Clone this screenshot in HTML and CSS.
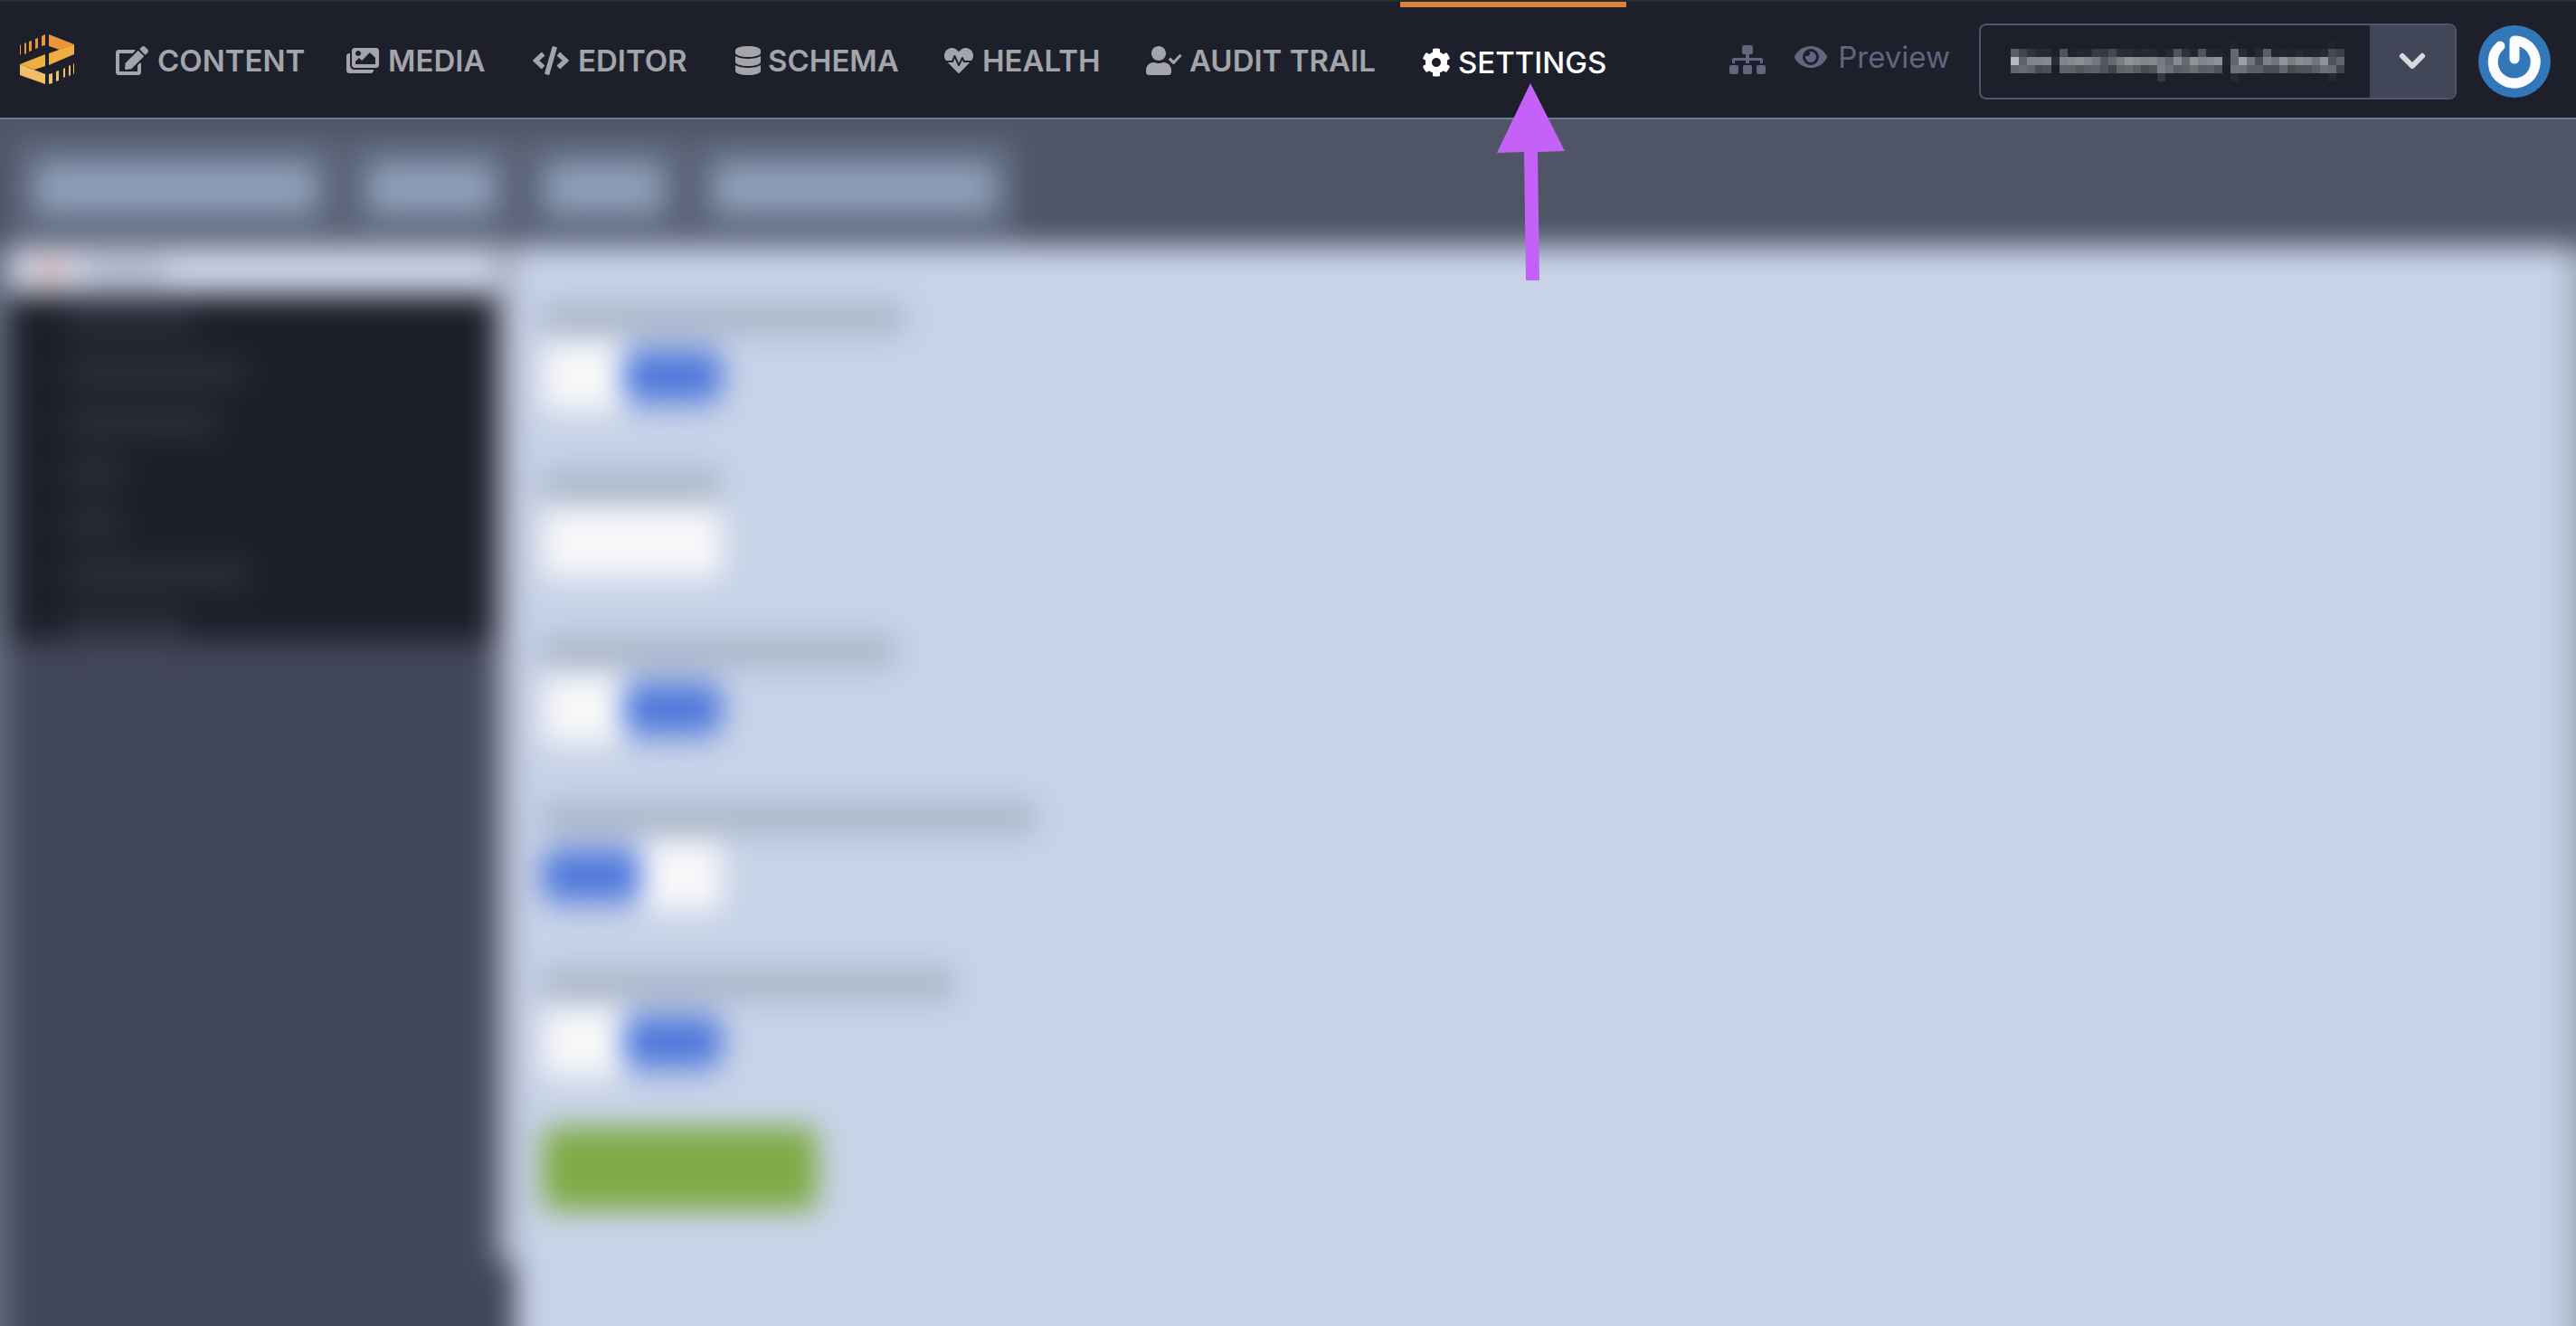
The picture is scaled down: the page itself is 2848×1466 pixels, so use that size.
FILE: index.html
```html
<!DOCTYPE html>
<html lang="en">
<head>
<meta charset="utf-8">
<title>Settings</title>
<link rel="stylesheet" href="styles.css">
</head>
<body>
<header class="topbar">
  <a class="logo" href="#" aria-label="Home">
    <svg width="60" height="56" viewBox="0 0 60 56">
      <g fill="#eb963c">
        <path d="M32 0L60 11 44 17 32 13z"/>
        <path d="M0 12l1-1v11l-1 1zM5 10l2-1v12l-2 1zM10 8l3-1v11l-3 1zM17 5l3-1v11l-3 1zM24 2l4-2v12l-4 1z"/>
      </g>
      <path fill="#f0ae40" d="M60 11v11L32 34V21zM28 22v13l-12 4L0 33z"/>
      <path fill="#f0c069" d="M0 33l28 11v11L0 45zM32 44l4-1v11l-4 1zM40 41l3-1v11l-3 1zM48 38l2-1v10l-2 1zM54 35l2-1v11l-2 1zM59 33l1-1v11l-1 1z"/>
    </svg>
  </a>
  <nav class="nav">
    <a class="nav-link" href="#"><svg width="36" height="32" viewBox="0 0 576 512"><path d="M402.600 83.200l90.200 90.200c3.800 3.800 3.800 10 0 13.800L274.400 405.600l-92.800 10.300c-12.400 1.400-22.900-9.100-21.500-21.500l10.300-92.800L388.800 83.200c3.800-3.800 10-3.800 13.800 0zm162-22.900l-48.800-48.800c-15.200-15.200-39.900-15.200-55.200 0l-35.400 35.400c-3.800 3.800-3.800 10 0 13.800l90.200 90.200c3.800 3.800 10 3.800 13.800 0l35.400-35.400c15.200-15.300 15.200-40 0-55.200zM384 346.200V448H64V128h229.800c3.200 0 6.200-1.300 8.500-3.500l40-40c7.600-7.600 2.200-20.500-8.500-20.500H48C21.500 64 0 85.500 0 112v352c0 26.500 21.500 48 48 48h352c26.500 0 48-21.500 48-48V306.200c0-10.700-12.900-16-20.500-8.500l-40 40c-2.200 2.300-3.500 5.300-3.500 8.500z"/></svg>CONTENT</a>
    <a class="nav-link" href="#"><svg width="36" height="32" viewBox="0 0 576 512"><path d="M480 416v16c0 26.510-21.490 48-48 48H48c-26.510 0-48-21.490-48-48V176c0-26.510 21.490-48 48-48h16v208c0 44.112 35.888 80 80 80h336zm96-80V80c0-26.510-21.490-48-48-48H144c-26.510 0-48 21.490-48 48v256c0 26.510 21.490 48 48 48h384c26.510 0 48-21.490 48-48zM256 128c0 26.510-21.490 48-48 48s-48-21.490-48-48 21.490-48 48-48 48 21.490 48 48zm-96 144l55.515-55.515c4.686-4.686 12.284-4.686 16.971 0L272 256l135.515-135.515c4.686-4.686 12.284-4.686 16.971 0L512 208v112H160v-48z" fill-rule="evenodd"/></svg>MEDIA</a>
    <a class="nav-link" href="#"><svg width="40" height="32" viewBox="0 0 640 512"><path d="M278.900 511.500l-61-17.700c-6.400-1.800-10-8.500-8.200-14.900L346.200 8.700c1.800-6.400 8.500-10 14.900-8.200l61 17.700c6.400 1.800 10 8.500 8.200 14.900L293.800 503.300c-1.900 6.400-8.500 10.100-14.900 8.200zm-114-112.200l43.500-46.400c4.600-4.900 4.300-12.700-.8-17.200L117 256l90.600-79.700c5.100-4.500 5.500-12.300.8-17.200l-43.500-46.400c-4.500-4.800-12.100-5.100-17-.5L3.800 247.200c-5.100 4.700-5.100 12.800 0 17.500l144.100 135.100c4.900 4.600 12.500 4.400 17-.5zm327.200.6l144.100-135.100c5.100-4.700 5.100-12.800 0-17.500L492.100 112.100c-4.800-4.500-12.400-4.300-17 .5L431.600 159c-4.600 4.900-4.300 12.700.8 17.200L523 256l-90.600 79.700c-5.100 4.500-5.500 12.300-.8 17.200l43.500 46.400c4.500 4.900 12.100 5.100 17 .6z"/></svg>EDITOR</a>
    <a class="nav-link nav-link-tight" href="#"><svg width="28" height="32" viewBox="0 0 448 512"><path d="M448 73.143v45.714C448 159.143 347.667 192 224 192S0 159.143 0 118.857V73.143C0 32.857 100.333 0 224 0s224 32.857 224 73.143zM448 176v102.857C448 319.143 347.667 352 224 352S0 319.143 0 278.857V176c48.125 33.143 136.208 48.572 224 48.572S399.874 209.143 448 176zm0 160v102.857C448 479.143 347.667 512 224 512S0 479.143 0 438.857V336c48.125 33.143 136.208 48.572 224 48.572S399.874 369.143 448 336z"/></svg>SCHEMA</a>
    <a class="nav-link" href="#"><svg width="32" height="32" viewBox="0 0 512 512"><path d="M320.200 243.800l-49.700 99.400c-6 12.100-23.400 11.700-28.900-.6l-56.900-126.300-30 71.700H60.600l182.500 186.500c7.100 7.300 18.600 7.300 25.700 0L451.400 288H342.300l-22.100-44.200zM473.700 73.900l-2.400-2.500c-51.500-52.600-135.800-52.600-187.400 0L256 100l-27.900-28.500c-51.500-52.700-135.900-52.700-187.400 0l-2.400 2.400C-10.400 123.700-12.500 203 31 256h102.400l35.900-86.200c5.400-12.900 23.600-13.100 29.300-.4l58.200 129.300 49-97.900c5.900-11.800 22.700-11.800 28.600 0l27.600 55.200H481c43.500-53 41.400-132.300-7.300-182.100z"/></svg>HEALTH</a>
    <a class="nav-link nav-link-tight" href="#"><svg width="40" height="32" viewBox="0 0 640 512"><path d="M224 256c70.700 0 128-57.300 128-128S294.700 0 224 0 96 57.300 96 128s57.300 128 128 128zm89.600 32h-16.700c-22.200 10.200-46.900 16-72.900 16s-50.600-5.800-72.900-16h-16.700C60.200 288 0 348.200 0 422.400V464c0 26.500 21.500 48 48 48h352c26.500 0 48-21.500 48-48v-41.600c0-74.200-60.200-134.400-134.400-134.400z"/><path d="M414 218l73 74 130-136" fill="none" stroke="currentColor" stroke-width="52" stroke-linejoin="round"/></svg>AUDIT TRAIL</a>
    <a class="nav-link nav-link-tight active" href="#" aria-current="page"><svg width="32" height="32" viewBox="0 0 512 512"><path d="M487.400 315.700l-42.600-24.600c4.300-23.200 4.300-47 0-70.200l42.600-24.600c4.900-2.800 7.100-8.600 5.500-14-11.100-35.600-30-67.800-54.700-94.600-3.800-4.100-10-5.100-14.800-2.300L380.800 110c-17.900-15.400-38.500-27.300-60.800-35.100V25.800c0-5.600-3.900-10.500-9.400-11.700-36.700-8.200-74.300-7.800-109.200 0-5.500 1.200-9.400 6.100-9.400 11.700V75c-22.200 7.900-42.800 19.800-60.800 35.100L88.700 85.500c-4.900-2.800-11-1.900-14.800 2.300-24.700 26.700-43.600 58.900-54.700 94.600-1.700 5.400.6 11.200 5.500 14L67.300 221c-4.300 23.200-4.300 47 0 70.200l-42.600 24.600c-4.900 2.800-7.100 8.600-5.500 14 11.100 35.600 30 67.800 54.700 94.600 3.800 4.100 10 5.100 14.800 2.300l42.600-24.600c17.900 15.400 38.500 27.300 60.800 35.100v49.200c0 5.600 3.900 10.500 9.400 11.700 36.700 8.200 74.300 7.800 109.200 0 5.500-1.200 9.400-6.100 9.400-11.700v-49.200c22.200-7.900 42.800-19.800 60.800-35.100l42.600 24.600c4.900 2.800 11 1.900 14.800-2.300 24.700-26.700 43.600-58.900 54.700-94.600 1.500-5.500-.7-11.300-5.600-14.100zM256 336c-44.100 0-80-35.900-80-80s35.900-80 80-80 80 35.900 80 80-35.900 80-80 80z"/></svg>SETTINGS
      <svg class="pointer" width="80" height="222" viewBox="0 0 80 222"><path fill="#c462f8" d="M39 0L77 75 47 76 49 218H34L32 76 2 77z"/></svg>
    </a>
  </nav>
  <div class="tools">
    <a class="tool" href="#" aria-label="Site map"><svg width="40" height="32" viewBox="0 0 40 32"><path d="M16 0h8q2 0 2 2v6q0 2-2 2h-2v4h13q2 0 2 2v4h-3v-3H22v3h-4v-3H6v3H3v-4q0-2 2-2h13v-4h-2q-2 0-2-2V2q0-2 2-2z"/><rect y="22" width="10" height="10" rx="2"/><rect x="15" y="22" width="10" height="10" rx="2"/><rect x="30" y="22" width="10" height="10" rx="2"/></svg></a>
    <a class="tool preview" href="#"><svg width="36" height="32" viewBox="0 0 576 512"><path d="M572.520 241.400C518.290 135.590 410.930 64 288 64S57.680 135.640 3.480 241.410a32.350 32.350 0 0 0 0 29.190C57.710 376.410 165.070 448 288 448s230.320-71.640 284.520-177.410a32.350 32.350 0 0 0 0-29.190zM288 400a144 144 0 1 1 144-144 143.930 143.930 0 0 1-144 144zm0-240a95.310 95.310 0 0 0-25.310 3.790 47.850 47.850 0 0 1-66.900 66.900A95.780 95.780 0 1 0 288 160z"/></svg>Preview</a>
    <div class="picker">
      <span class="picker-value"><svg id="masked" width="369" height="45" viewBox="0 0 41 5" shape-rendering="crispEdges"></svg></span>
      <button class="picker-toggle" type="button" aria-label="Choose"><svg width="30" height="20" viewBox="0 0 30 20"><path d="M4 4l11 11L26 4" fill="none" stroke="#d9d9dc" stroke-width="6" stroke-linecap="round" stroke-linejoin="round"/></svg></button>
    </div>
    <a class="avatar" href="#" aria-label="Account"><svg width="80" height="80" viewBox="0 0 80 80"><circle cx="40" cy="40" r="40" fill="#3277b8"/><path d="M24 23A23.500 23.500 0 1 0 40 17V37" fill="none" stroke="#fbfcfd" stroke-width="11" stroke-linecap="round" stroke-linejoin="round"/></svg></a>
  </div>
</header>
<div class="stage">
<main class="soft">
  <div class="tabs">
    <button class="tab tab-l" type="button" aria-label="Tab 1"><span></span></button>
    <button class="tab tab-m" type="button" aria-label="Tab 2"><span></span></button>
    <button class="tab tab-s" type="button" aria-label="Tab 3"><span></span></button>
    <button class="tab tab-l" type="button" aria-label="Tab 4"><span></span></button>
  </div>
  <div class="columns">
    <aside class="sidebar">
      <div class="side-head"><i class="dot"></i><span class="ink"></span></div>
      <ul class="side-list">
        <li style="width:140px"></li>
        <li style="width:195px"></li>
        <li style="width:165px"></li>
        <li style="width:60px"></li>
        <li style="width:60px"></li>
        <li style="width:200px"></li>
        <li style="width:130px"></li>
      </ul>
    </aside>
    <div class="gutter"></div>
    <form class="form">
      <div class="field"><span class="ink" style="width:400px"></span><div class="switch"><input type="radio" name="a" aria-label="On"><input class="wide" type="radio" name="a" aria-label="Off" checked></div></div>
      <div class="field"><span class="ink" style="width:195px"></span><div class="switch"><input type="radio" name="b" aria-label="On"><input type="radio" name="b" aria-label="Off"></div></div>
      <div class="field"><span class="ink" style="width:390px"></span><div class="switch"><input type="radio" name="c" aria-label="On"><input class="wide" type="radio" name="c" aria-label="Off" checked></div></div>
      <div class="field"><span class="ink" style="width:545px"></span><div class="switch"><input class="wide" type="radio" name="d" aria-label="On" checked><input type="radio" name="d" aria-label="Off"></div></div>
      <div class="field"><span class="ink" style="width:455px"></span><div class="switch"><input type="radio" name="e" aria-label="On"><input class="wide" type="radio" name="e" aria-label="Off" checked></div></div>
      <button class="save" type="button" aria-label="Save"></button>
    </form>
  </div>
</main>
</div>
<script src="masked.js"></script>
</body>
</html>
```
FILE: styles.css
```css
* { box-sizing: border-box; }
body {
  margin: 0;
  min-height: 100vh;
  display: flex;
  flex-direction: column;
  background: #4f5467;
  font-family: Inter, "Liberation Sans", sans-serif;
  font-size: 33px;
}
a { color: inherit; text-decoration: none; }
svg { fill: currentColor; flex: none; display: block; }

.topbar {
  position: relative;
  z-index: 2;
  display: flex;
  height: 132px;
  padding: 0 28px 0 22px;
  background: #1d202b;
  border-top: 2px solid #292a29;
  border-bottom: 2px solid #6d7a94;
}
.logo { padding-top: 36px; margin-right: 22px; }
.nav {
  display: grid;
  grid-template-columns: 255px 206px 224px 231px 223px 305px 250px;
}
.nav-link {
  position: relative;
  display: flex;
  align-items: center;
  gap: 10px;
  padding: 4px 0 0 24px;
  margin-top: -2px;
  color: #a4a5aa;
  font-weight: 600;
  white-space: nowrap;
}
.nav-link-tight { gap: 8px; }
.active {
  margin-top: 0;
  padding-top: 0;
  border-top: 6px solid #e0803e;
  color: #fff;
  font-weight: 500;
}
.pointer { position: absolute; left: 105px; top: 84px; }

.tools {
  margin-left: auto;
  display: flex;
  align-items: center;
  color: #5f667e;
}
.tool { margin-right: 32px; }
.preview {
  display: flex;
  align-items: center;
  gap: 12px;
  margin-bottom: 6px;
}
.picker {
  display: flex;
  width: 528px;
  height: 84px;
  margin: 4px 24px 0 0;
  border: 2px solid #4f566a;
  border-radius: 8px;
  overflow: hidden;
}
.picker-value { flex: 1; padding: 17px 0 0 33px; }
.picker-toggle {
  width: 94px;
  display: grid;
  place-items: center;
  border: 0;
  background: #424659;
}
.avatar { margin-top: 4px; }

.stage { flex: 1; display: flex; overflow: hidden; }
.soft {
  flex: 1;
  display: flex;
  flex-direction: column;
  margin: -50px;
  padding-top: 50px;
  background: #4f5467;
  filter: blur(16px);
}
.tabs {
  display: flex;
  gap: 10px;
  height: 140px;
  padding: 20px 0 8px 66px;
}
.tab {
  padding: 22px;
  border: 0;
  background: #5f697e;
}
.tab span { display: block; height: 56px; border-radius: 16px; background: #8fa0ba; }
.tab-l { width: 358px; }
.tab-m { width: 186px; }
.tab-s { width: 176px; }

.columns {
  flex: 1;
  display: flex;
  padding: 0 56px 0 0;
  background: #98a1b3;
}
.sidebar {
  width: 598px;
  border-left: 60px solid #656e80;
  background: #424659;
}
.side-head {
  display: flex;
  align-items: center;
  height: 54px;
  padding-left: 30px;
  gap: 24px;
  background: #ced4e8;
}
.side-head .ink { width: 90px; height: 30px; margin: 0; background: #b2b8ca; }
.dot { width: 30px; height: 30px; border-radius: 50%; background: #dcb0a6; }
.side-list {
  display: flex;
  flex-direction: column;
  gap: 26px;
  height: 382px;
  margin: 0;
  padding: 14px 0 0 64px;
  list-style: none;
  background: #1c1f29;
}
.side-list li { height: 30px; background: #2d303c; }
.gutter {
  width: 22px;
  background: linear-gradient(#a8acc0 calc(100% - 120px), #424659 0);
}

.form {
  flex: 1;
  padding: 62px 0 100px 30px;
  background: #c8d3e8;
}
.field { height: 184px; }
.ink { display: block; height: 36px; margin-bottom: 8px; background: #abb6c9; }
.switch {
  display: flex;
  width: 198px;
  height: 76px;
}
.switch input {
  appearance: none;
  flex: 9;
  margin: 0;
  background: #f8f8f9;
}
.switch .wide { flex: 11; }
.switch input:checked { border-radius: 24px; background: linear-gradient(#a5b8e6, #3f6dd9 42%, #3f6dd9 58%, #a5b8e6); }
.save {
  display: block;
  width: 304px;
  height: 92px;
  margin-top: -8px;
  border: 0;
  border-radius: 12px;
  background: #7eab46;
}
```
FILE: masked.js
```js
// Each row: y position, then one colour per column ("-" leaves the cell empty).
const rows = [
  [1, "5b5e69 434650 30343f 272a35 272a34 - 50535f 21242f 252833 252833 383b46 363944 454852 2b2e39 2a2d38 232632 272a35 262934 1f222d 272a35 50535e 2e303c 242732 50535f 242732 23262f - 666871 282b36 - 272a35 5b5e66 21242f 23262f 21242f 272a35 21242f 23262f 272a35 454752 3b3e49"],
  [2, "b7b9bd 5f636e 82858f 838487 87888b 282c37 838487 87888b 8d8e92 838487 727680 55585f 656870 7c7d80 929397 8b8c8f 838487 87888b 757a84 65686f 8a8b8e 66696f 929397 82858c 87898d 8f9194 22252f 62656e 9fa0a4 70747e 4c4f5b 808285 70747e 949598 7a7c80 8b8c91 85868f 72757e 929396 50535d 62656f"],
  [3, "62646e 686b73 60636c 494c55 4e515a - 5f626b 5d6069 53565f 595c65 5d6069 50535b 41444c 60636c 65686f 595c65 484b54 50535c 7a7d85 6d7078 5a5d65 5f626b 6a6d74 5a5d65 5d6069 50535c - 70737a 6d7078 5a5d65 5c5f67 4b4e56 4b4e56 62656c 484b53 4e5159 50535b 5c5f67 6d7078 686b72 41444d"]
];
const svg = document.getElementById("masked");
function cell(x, y, colour) {
  const rect = document.createElementNS("http://www.w3.org/2000/svg", "rect");
  rect.setAttribute("x", x);
  rect.setAttribute("y", y);
  rect.setAttribute("width", 1);
  rect.setAttribute("height", 1);
  rect.setAttribute("fill", "#" + colour);
  svg.append(rect);
}
rows.forEach(([y, colours]) => colours.split(" ").forEach((c, x) => c !== "-" && cell(x, y, c)));
cell(27, 0, "21242f");
cell(39, 0, "21242f");
cell(18, 4, "353843");
cell(27, 4, "272a35");
cell(39, 4, "272a35");
```
